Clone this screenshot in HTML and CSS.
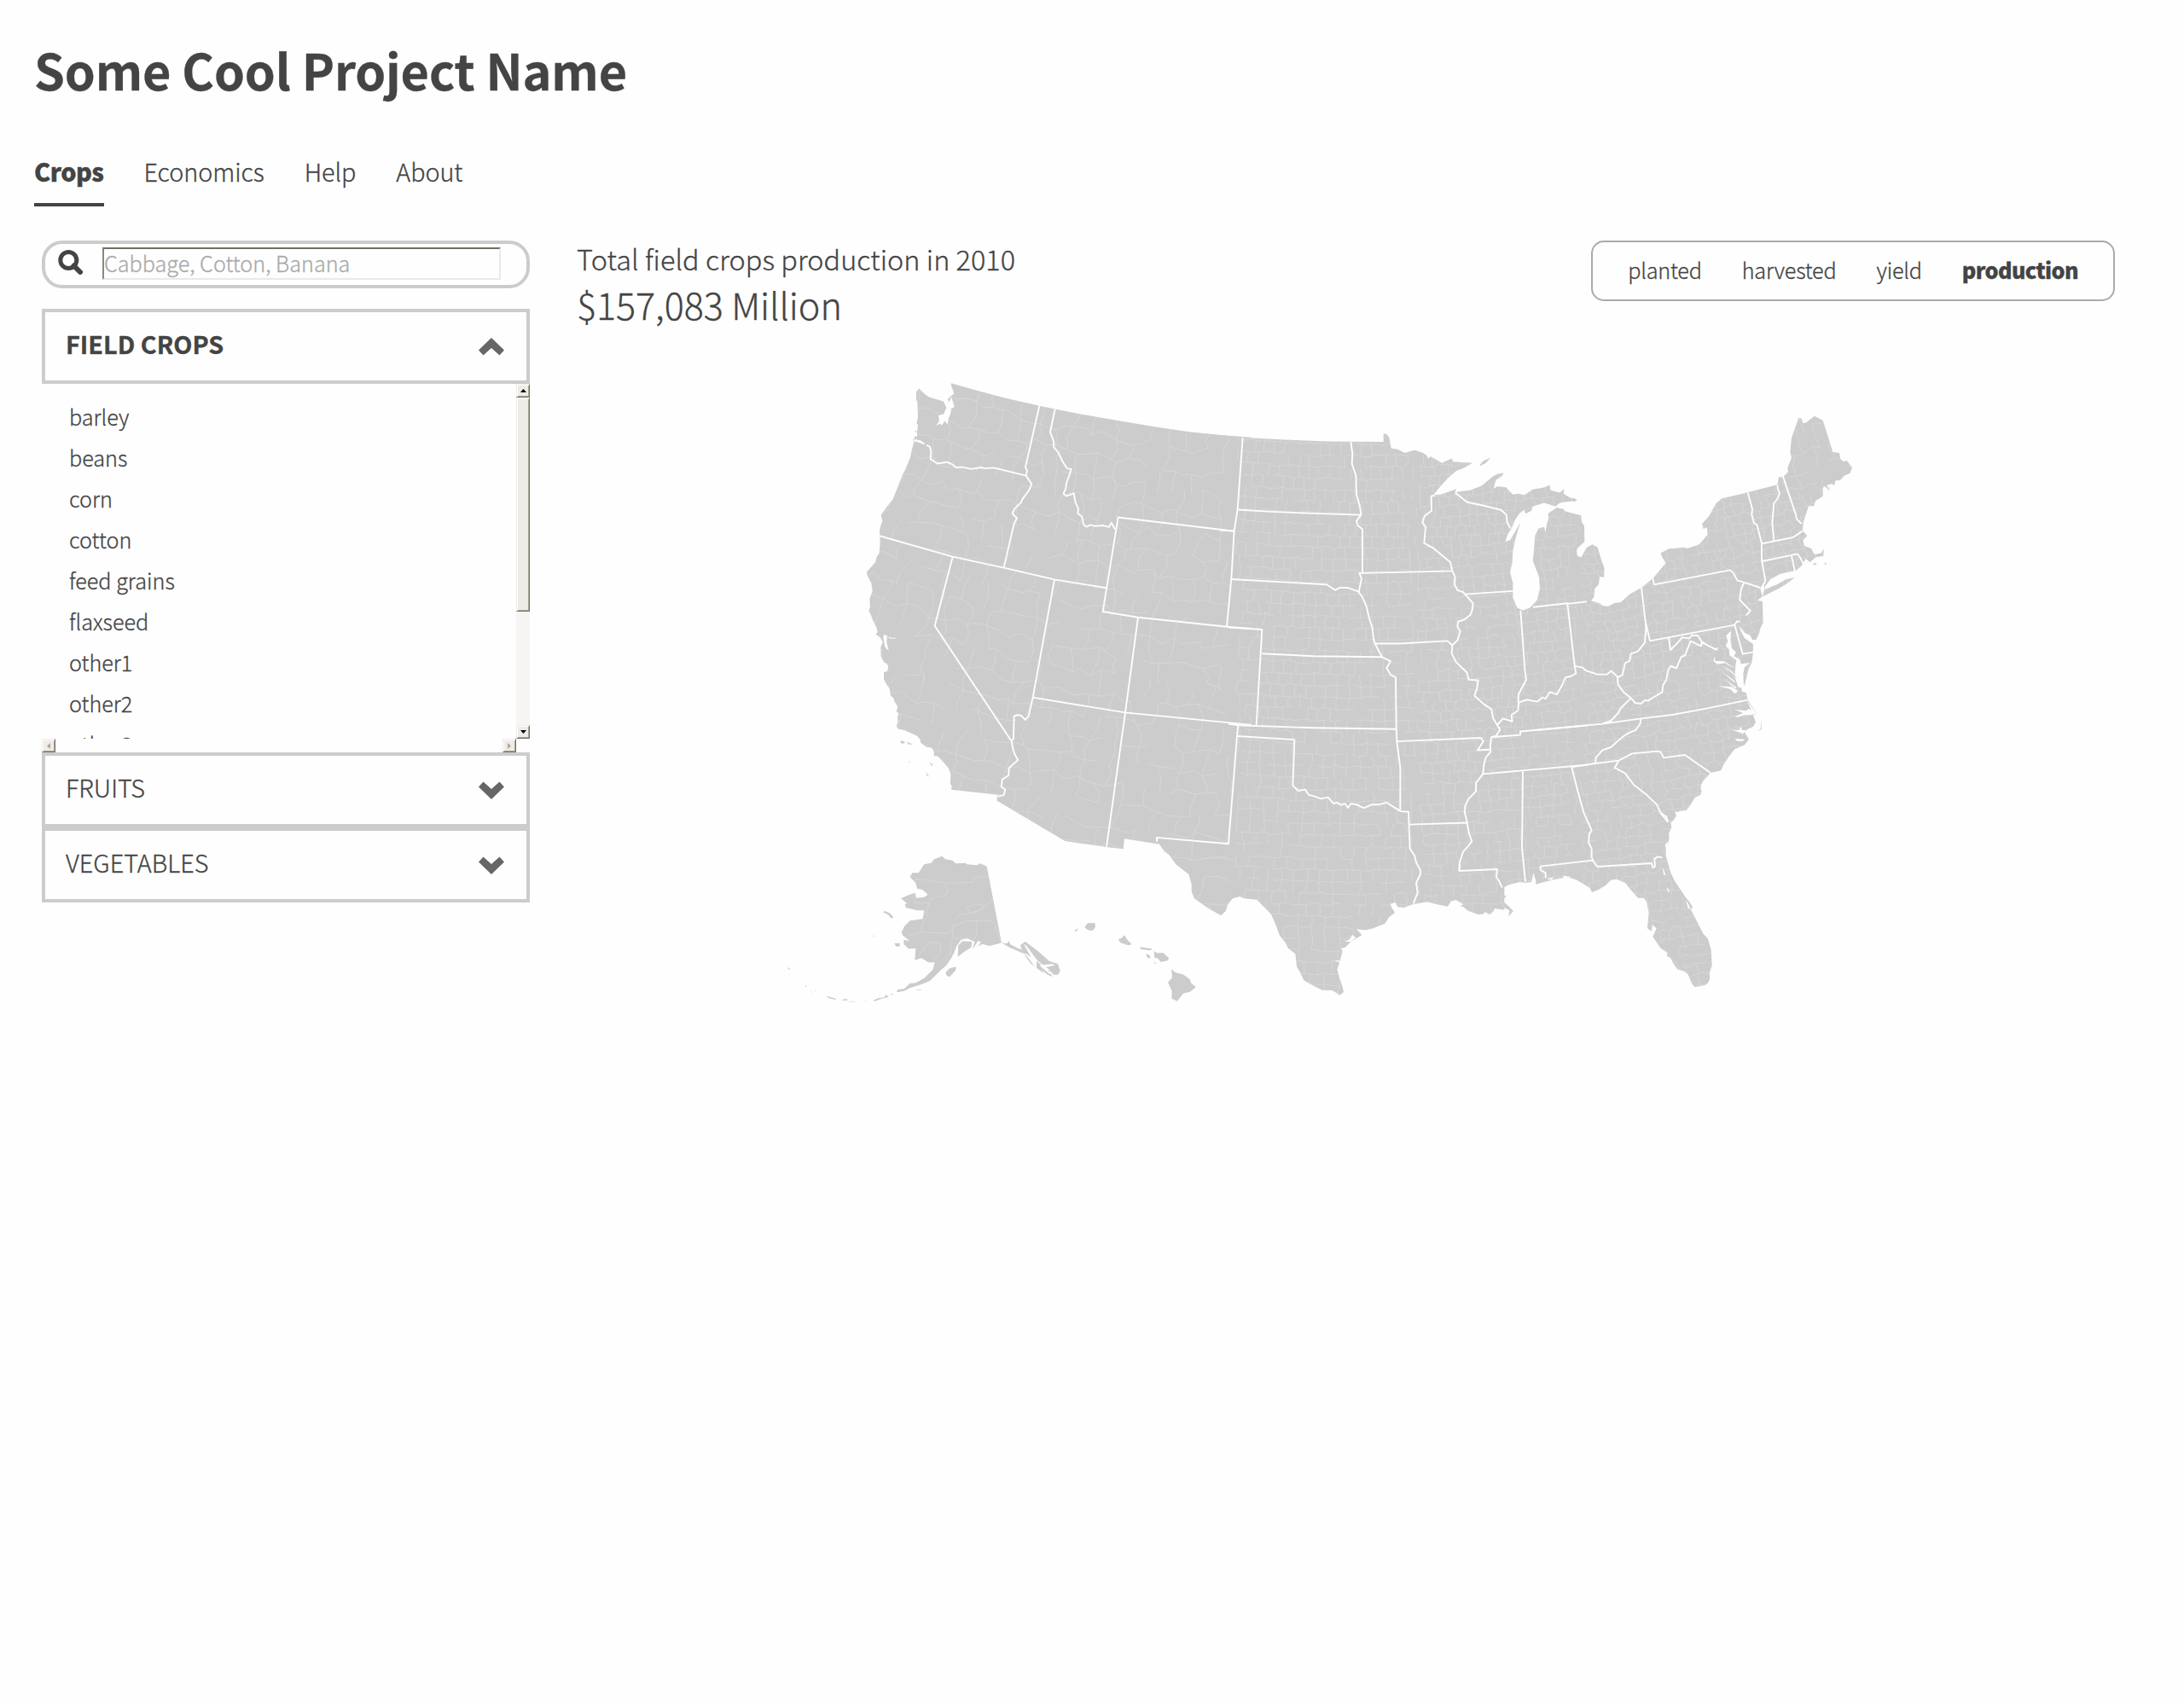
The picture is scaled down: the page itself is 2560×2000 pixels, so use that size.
FILE: index.html
```html
<!DOCTYPE html>
<html lang="en">
<head>
<meta charset="utf-8">
<title>Some Cool Project Name</title>
<link rel="stylesheet" href="styles.css">
</head>
<body>
<header class="site-header">
  <h1 class="site-title">Some Cool Project Name</h1>
  <nav class="tabs">
    <a class="tab tab-active">Crops</a>
    <a class="tab">Economics</a>
    <a class="tab">Help</a>
    <a class="tab">About</a>
  </nav>
</header>
<main class="content">
  <aside class="sidebar">
    <div class="search">
      <svg class="search-icon" viewBox="0 0 29 29"><circle cx="12.3" cy="12" r="9.5" fill="none" stroke="#444" stroke-width="5"/><path d="M18.5 18.5L26 26" stroke="#444" stroke-width="6" stroke-linecap="round"/></svg>
      <div class="search-field">Cabbage, Cotton, Banana</div>
    </div>
    <section class="group group-open">
      <span>FIELD CROPS</span>
      <svg class="chevron" viewBox="0 0 30 21"><path d="M15 0L30 14.5 24.5 20.5 15 12 5.500 20.5 0 14.500Z"/></svg>
    </section>
    <div class="scroller">
      <ul class="crops">
        <li>barley</li><li>beans</li><li>corn</li><li>cotton</li><li>feed grains</li><li>flaxseed</li><li>other1</li><li>other2</li><li>other3</li>
      </ul>
      <div class="vbar">
        <div class="bar-btn"><svg viewBox="0 0 7 4"><path d="M3.5 0L7 4H0Z"/></svg></div>
        <div class="thumb"></div>
        <div class="track"></div>
        <div class="bar-btn"><svg viewBox="0 0 7 4"><path d="M0 0H7L3.500 4Z"/></svg></div>
      </div>
    </div>
    <div class="hbar">
      <div class="bar-btn bar-off"><svg viewBox="0 0 4 7"><path d="M4 0V7L0 3.500Z"/></svg></div>
      <div class="bar-btn bar-off"><svg viewBox="0 0 4 7"><path d="M0 0V7L4 3.500Z"/></svg></div>
    </div>
    <section class="group">
      <span>FRUITS</span>
      <svg class="chevron" viewBox="0 0 30 21"><path d="M15 21L30 6.500 24.500 .5 15 9 5.500 .5 0 6.500Z"/></svg>
    </section>
    <section class="group">
      <span>VEGETABLES</span>
      <svg class="chevron" viewBox="0 0 30 21"><path d="M15 21L30 6.500 24.500 .5 15 9 5.500 .5 0 6.500Z"/></svg>
    </section>
  </aside>
  <div class="main">
    <div class="summary">
      <div class="totals">
        <div class="total-label">Total field crops production in 2010</div>
        <div class="total-value">$157,083 Million</div>
      </div>
      <div class="measures">
        <a>planted</a><a>harvested</a><a>yield</a><a class="measure-active">production</a>
      </div>
    </div>
    <svg class="map" viewBox="900 430 1300 780">
      <defs>
        <path id="west" transform="translate(1000 430) scale(.33333 .3699)" d="M345 52L400 66 455 80 530 98 655 124 710 134 800 150 930 170 1060 190 1180 206 1300 217 1400 224V1512H1068L954 1496 950 1528 890 1522 745 1503 505 1375 508 1360 515 1357 345 1340 347 1328 342 1322 343 1290 335 1272 320 1256 300 1236 290 1232 284 1236 285 1224 281 1213 275 1207 258 1205 238 1192 236 1182 225 1170 200 1160 180 1152 160 1148 152 1140 158 1125 156 1112 160 1098 152 1092 157 1078 145 1060 142 1050 132 1042 128 1020 115 1002 108 990 108 968 120 965 124 950 118 940 110 938 98 918 97 890 104 872 95 858 80 848 86 840 82 825 70 805 63 788 55 772 60 760 58 735 68 712 66 698 64 685 50 662 48 650 60 638 78 620 82 605 92 590 95 555 93 520 98 500 103 488 98 470 115 448 140 420 155 385 175 340 184 325 200 290 208 258 214 238 211 230 222 215 217 205 226 200 228 185 223 178 228 160 226 112 222 105 222 80 232 69 248 83 265 95 300 105 325 112 340 95 355 85 345 60Z"/>
        <path id="central" transform="translate(1440 480) scale(.33333 .34439)" d="M-60 85L0 90 50 95 200 103 350 109 545 110V82L556 84 565 95 572 132 595 136 620 148 640 142 655 139 685 148 695 155 704 168 710 160 725 168 750 182 785 167 790 178 858 182 830 198 800 210 770 235 745 262 720 292 745 290 790 275 800 270 795 292 805 280 850 275 890 260 930 228 945 220 968 216 960 228 940 240 932 270 945 262 975 265 1000 290 1020 287 1040 292 1070 272 1110 266 1130 257 1132 275 1165 283 1181 270 1178 287 1205 303 1215 302 1222 310 1165 318 1150 330 1110 318 1070 330 1065 345 1045 355 1040 342 1025 352 1008 375 995 405 982 425 973 450 990 445 1010 412 1027 385 1018 410 1008 445 1000 480 998 520 990 555 1000 590 1000 640 1015 675 1035 684 1060 675 1085 650 1095 610 1092 570 1080 540 1070 515 1073 490 1078 430 1090 405 1110 400 1114 418 1122 380 1140 365 1142 350 1155 335 1180 340V1568H-60Z"/>
        <path id="east" transform="translate(1800 470) scale(.33333)" d="M45 395L60 385 75 375 110 390 130 395 160 403 162 425 171 440 172 495 150 515 144 525 147 545 160 550 180 515 200 505 218 515 230 555 242 590 240 620 225 618 222 645 208 660 205 690 195 703 225 712 235 720 255 723 275 712 300 708 330 680 372 657 412 625 458 570 445 550 440 535 470 520 520 515 535 518 575 505 605 470 602 445 590 450 585 433 610 405 635 360 655 343 745 322 850 295 855 268 870 268 888 250 886 235 900 200 895 180 900 130 925 60 935 62 940 78 950 77 980 53 1010 68 1045 180 1068 183 1072 205 1082 213 1095 210 1113 235 1105 255 1085 263 1070 280 1055 280 1050 297 1038 290 1032 315 1018 300 1010 305 1010 335 995 345 985 350 978 370 960 370 950 400 942 425 938 455 955 475 940 490 945 510 960 515 970 520 980 540 1006 535 1010 522 1000 514 1013 525 1012 545 985 550 965 568 950 555 935 580 915 597 900 600 860 608 825 628 805 655 808 662 850 645 880 628 912 620 880 645 850 662 795 690 780 702 798 705 800 780 790 800 785 820 775 840 762 840 755 825 735 815 715 790 722 810 735 835 765 855 765 885 760 920 748 945 735 1000 725 1000V1022L740 1026 745 1050 778 1100 765 1105 774 1130 765 1145 745 1155 735 1165 750 1190 735 1210 700 1225 680 1250 660 1280 652 1300 615 1308 590 1335 582 1350 580 1375 560 1395 540 1415 525 1440H45Z"/>
        <path id="south" transform="translate(1700 760) scale(.33333)" d="M0 400L860 500 885 500 880 515 860 525 845 550 830 570 805 572 785 605 775 612 778 630 768 650 770 665 765 690 758 705 758 730 768 765 775 790 790 820 830 880 842 893 853 912 845 917 890 1005 905 1020 917 1060 920 1115 912 1140 912 1165 905 1178 895 1185 860 1192 850 1180 835 1145 820 1135 800 1130 785 1110 775 1090 762 1082 762 1070 755 1065 740 1055 712 1015 725 985 710 973 708 995 693 985 698 930 690 890 680 878 660 878 635 850 615 825 585 812 565 815 545 835 520 850 498 858 490 842 445 815 415 805 370 812 330 822 300 830 301 818 292 790 286 822 265 825 245 822 210 830 185 842 165 860 190 856 186 868 198 872 180 885 205 907 222 925 205 942 208 922 190 912 150 908 155 920 145 932 125 925 115 935 95 935 60 922 30 895 0 890Z"/>
        <path id="texas" transform="translate(1400 900) scale(.33333)" d="M-133 255L-105 295 -90 305 -65 340 -20 375 -10 410 -10 435 0 460 45 492 93 520 110 505 118 480 135 460 160 453 175 460 220 464 235 480 270 515 285 550 300 590 320 615 330 635 355 655 360 700 372 720 385 748 415 765 450 782 485 783 512 800 525 788 518 760 512 745 502 710 512 680 522 640 550 612 590 588 570 568 610 572 640 560 670 548 685 525 705 510 690 478 705 485 720 498 770 480 820 472 850 480 890 488 905 468 935 475 935 488 950 490 970 505 1000 517 1015 503 1040 517 1055 495 1090 500V250Z"/>
        <path id="alaska" transform="translate(900 980) scale(.33333)" d="M612 71L625 82 650 86 660 97 695 95 700 100 735 103 748 97 770 107 822 376 780 387 755 380 720 395 728 372 700 360 680 365 665 385 655 410 645 430 628 455 610 470 570 510 540 522 500 535 480 545 452 550 458 540 480 538 500 518 520 517 550 500 580 470 587 445 565 445 540 430 517 437 520 395 495 397 478 380 478 365 500 370 475 350 470 340 480 318 500 298 545 292 550 262 525 262 485 252 482 240 490 238 468 220 495 208 518 200 522 218 548 216 563 206 545 190 525 185 520 165 500 145 508 130 530 130 550 100 575 95 585 82ZM668 425L670 385 685 370 718 372 715 392 690 408ZM625 480L640 465 663 460 660 473 640 495 630 493ZM445 377L465 377 463 390 450 388ZM405 268L412 264 430 272 443 287 432 289 425 278ZM822 376L840 379 848 369 852 381 880 395 893 400 888 385 905 371 950 405 990 440 1020 450 1028 475 1020 488 1005 488 990 470 1000 495 965 480 940 460 925 450 900 415 880 405 850 392ZM68 463L76 465 77 473ZM130 528L138 526 133 532ZM205 562L218 566 240 572 238 576 215 571ZM262 575L280 573 278 579 262 578ZM370 578L390 570 410 568 415 558 425 566 395 574 378 581ZM430 557L440 554 436 560ZM278 581L306 582 304 584ZM340 580L345 579 344 582ZM152 547L155 549 154 553ZM165 542L172 545 168 546ZM367 347L374 354 371 355ZM78 484L81 485 79 487ZM521 540L545 542 530 544Z"/>
        <path id="hawaii" transform="translate(900 980) scale(.33333)" d="M1078 336L1085 328 1092 326 1086 335ZM1114 320L1125 307 1150 306 1152 320 1142 334 1125 331ZM1232 362L1242 361 1255 349 1264 365 1280 381 1268 385 1240 376ZM1310 391L1352 397 1345 403 1310 398ZM1328 415L1340 418 1347 427 1338 431ZM1358 405L1370 412 1390 411 1411 430 1405 439 1382 443 1370 430 1360 428ZM1356 447L1368 443 1362 449ZM1419 469L1433 480 1460 487 1485 505 1487 515 1505 532 1485 548 1460 554 1440 581 1420 572 1421 545 1407 515 1422 498Z"/>
        <path id="isles" transform="translate(1000 430) scale(.33333 .3699)" d="M165 1185L180 1187 182 1193 170 1194ZM189 1188L210 1196 195 1197ZM268 1253L280 1260 277 1266ZM257 1284L267 1299 260 1297ZM195 1251L202 1254 198 1255Z"/>
        <path id="royale" transform="translate(1440 480) scale(.33333 .34439)" d="M883 190L895 176 922 164 905 182 887 192Z"/>
        <path id="atlantic" transform="translate(1800 470) scale(.33333)" d="M975 577L980 568 990 576ZM1015 568L1024 574 1018 577ZM120 350L135 342 146 348 138 354ZM793 1120L794 1155 782 1161 791 1153Z"/>
        <clipPath id="land"><use href="#west"/><use href="#central"/><use href="#east"/><use href="#south"/><use href="#texas"/></clipPath>
      </defs>
      <g class="land"><use href="#west"/><use href="#central"/><use href="#east"/><use href="#south"/><use href="#texas"/><use href="#alaska"/><use href="#hawaii"/><use href="#isles"/><use href="#royale"/><use href="#atlantic"/></g>
      <g clip-path="url(#land)"><path id="counties" class="county"/></g>
      <g class="county" transform="translate(900 980) scale(.33333)">
        <path d="M518 153L545 153 620 166 722 163 725 149 775 140M620 166L634 190 630 207 590 217 568 225V238L515 235V205M568 238L555 270 560 285 542 310V338L640 343 650 325 655 300 672 276 728 272 790 225M542 338L495 350M650 320L695 300 780 298 800 312 820 375M735 300V340L730 360H650V322M700 250L735 240 760 245 755 260 708 270ZM643 360V415L628 425V440M530 425L565 375H607V410L585 435"/>
      </g>
      <g class="water" transform="translate(1000 430) scale(.33333 .3699)">
        <path d="M318 110L330 100 338 112 345 95 350 108 356 128 345 132 342 150 335 165 332 182 322 172 312 186 306 180 292 187 303 170 300 154 318 150 328 130ZM316 78L330 72 336 84 350 70 345 88 325 92ZM211 228L240 235 250 245 230 240ZM225 198L215 218 225 222ZM106 860L108 849 120 852 118 872 125 900 112 888ZM120 855L140 860 150 858 148 862 130 861Z"/>
      </g>
      <g class="water" transform="translate(1800 470) scale(.33333)">
        <path d="M688 808L670 825 676 845 668 862 680 873 682 895 706 912 702 940 700 970 712 1005 725 1010 733 1025 730 960 735 935 755 922 722 925 718 908 697 898 705 885 690 870 685 840ZM628 898L632 915 660 915 690 932 700 940 665 922 640 926 626 915ZM650 930L690 950 710 978 685 952ZM640 1002L690 1006 712 1020 700 1030 685 1014ZM662 978L705 1006 703 1012ZM645 945L700 985 702 992ZM700 1110L730 1098 700 1085 740 1090 750 1082 778 1100 755 1105 735 1105 710 1112ZM690 1157L715 1158 722 1145 726 1158 740 1158 730 1170ZM700 1188L735 1190 730 1196 710 1197ZM742 1052L778 1100 760 1090ZM1025 295L1030 310 1040 295ZM790 660L800 640 805 660 798 690Z"/>
      </g>
      <g class="water" transform="translate(1700 760) scale(.33333)">
        <path d="M746 770L755 790 764 828 758 800 750 795ZM760 840L770 850 768 862ZM828 885L838 900 845 920 835 912ZM775 605L795 590 812 575 790 575 795 590ZM755 690L765 680 760 710ZM340 810L365 806 355 815ZM395 800L425 803 400 808ZM2 895L25 905 15 910 5 905Z"/>
      </g>
      <g class="water" transform="translate(1400 900) scale(.33333)">
        <path d="M686 470L690 480 706 473 715 490 735 492 708 510 695 495ZM570 565L582 575 600 572 625 565 590 590ZM555 588L568 598 550 612 528 612 545 605ZM515 635L530 632 525 650ZM490 675L515 680 510 685ZM900 470L920 465 945 480 930 492 905 482Z"/>
      </g>
      <g class="water" transform="translate(900 980) scale(.33333)">
        <path d="M900 380L908 385 950 440 990 470 985 474 945 440 945 465 935 455 905 415 925 425ZM895 410L915 418 912 424 900 415ZM925 425L935 432 932 445ZM955 455L1000 450 1010 455 975 462 1000 485 990 485ZM960 470L985 488 975 488ZM740 368L750 375 735 390 722 395Z"/>
      </g>
      <g class="state" transform="translate(1000 430) scale(.33333 .3699)">
        <path d="M214 234L235 236 250 245M258 248L270 254 274 268 272 292 296 307 330 302 350 310 362 319 385 318 415 324 450 319 465 322 495 320 608 345M655 124L606 318 612 330 608 345 628 372 618 392 595 420 590 430 568 450 560 465 576 480 566 497 560 520 530 637M93 536L350 602 530 637 708 674 890 701M350 602L287 821 557 1187 562 1210 568 1228 580 1247 562 1260 548 1272 547 1295 524 1308 522 1332 535 1340 530 1357 510 1362M557 1187L564 1178 566 1107 580 1103 592 1106 605 1119 617 1108 632 1048 708 674M632 1048L957 1096 1380 1133 1400 1135M1400 830L1314 824 1002 794 957 1096 891 1522M710 134L693 207 705 235 706 255 722 272 735 298 752 322 767 324 760 345 750 368 748 385 740 402 750 410 776 401 782 430 792 450 790 465 805 475 810 500 820 507 835 501 850 505 880 503 900 508 908 494 921 515M1002 794L878 776 932 477 1340 521M1370 224L1352 451 1340 521 1330 672 1314 824M1354 1135L1350 1171 1320 1512 1068 1492 1068 1505"/>
      </g>
      <g class="state" transform="translate(1440 480) scale(.33333 .34439)">
        <path d="M430 111L436 150 434 185 448 225 450 290 462 330 466 359 450 380 455 395 471 408V557M32 341L150 348 300 354 466 359M-30 411L20 414M10 578L345 596 375 615 390 607 420 607 462 622M785 550L471 557 460 557 468 575 458 622 470 638 485 670 495 712 505 740 510 780 515 797 540 843 570 857 556 880 570 903 588 912 590 1090 592 1130 604 1220V1364M515 797L600 797 770 788 787 803M118 831L300 840 540 843M0 742L118 749 98 1075M0 1070L35 1075 300 1084 590 1088M32 1112L232 1124 226 1280 245 1298 270 1294 282 1312 305 1318 325 1325 350 1320 370 1342 380 1338 395 1346 410 1342 420 1356 430 1342 450 1345 475 1357 505 1345 530 1345 555 1338 575 1350 605 1368 633 1370 638 1495 655 1520 660 1542 675 1568M592 1130L888 1118 896 1130 876 1160 918 1158M725 292L713 295 714 345 690 362 682 385 693 400 688 455 720 472 745 492 780 520 787 550 797 570 795 595 805 615 825 622 860 660 858 680 850 700 830 715 808 722 805 740 815 755 806 785 787 803 785 830 800 860 838 895 845 920 878 922 875 945 865 975 900 1005 925 1020 930 1050 945 1075M832 629L1000 618M800 285L838 315 900 328 958 342 977 358 980 385 992 405M1027 684L1042 885 1047 920 1020 970 1018 995M1070 673L1192 660 1200 661 1260 654M1192 660L1217 872 1222 898 1205 908 1185 912 1175 935 1155 970 1130 962 1115 985 1105 980 1085 995 1050 988 1020 998 1018 1025 995 1040 998 1062 965 1052 945 1075 955 1090 940 1112 925 1115 920 1140 922 1165 905 1185 898 1210 895 1240 880 1260 870 1270 870 1300 845 1325 832 1350 830 1370 838 1400 845 1440 856 1470 840 1490 825 1505 812 1545 812 1568M928 1115L1026 1108V1096L1260 1076M895 1241L1260 1210M636 1413L838 1407"/>
      </g>
      <g class="state" transform="translate(1800 470) scale(.33333)">
        <path d="M372 657L386 775 402 844 700 788 708 775 718 777M412 625L417 646 684 595 695 605 710 632 733 638 790 657M733 638L722 665 718 700 755 738 740 754M386 768L388 800 384 850 360 880 335 890 330 915 315 922 305 965 288 972 280 962 265 950 250 962 215 962 205 957 180 950 165 938 135 932M288 972L290 998 310 1025 335 1045 300 1080 290 1098 265 1125 235 1135M335 1045L350 1062 370 1065 385 1052 395 1055 415 1042 445 1025 448 1000 460 980 465 950 475 932 495 940 512 900 525 895 545 845 582 862 585 848 605 860 635 875 640 868M468 832L474 876 500 850 515 832 540 835 550 824 570 825 585 848M0 1158L235 1136 370 1117 480 1104 600 1082 745 1052M370 1117L368 1135 352 1158 340 1162 315 1175 290 1195 265 1218 235 1228 212 1255 210 1275M125 1288L210 1275 292 1265 340 1240 430 1232 440 1235 450 1255 525 1245 615 1308M292 1265L278 1290 315 1310 345 1350 390 1385 405 1400 425 1418 440 1450 465 1480M700 788L728 890 765 884M746 322L762 380 760 400 768 430 778 435 795 500V560L808 632 800 650M850 295L852 310 858 325 850 345 838 360 832 430 838 490M870 266L915 400 918 415 935 432M795 502L905 480 920 470 938 458M797 564L920 538 930 550 942 575M900 545L912 600"/>
      </g>
      <g class="state" transform="translate(1700 760) scale(.33333)">
        <path d="M30 783L165 777 162 805 172 820 182 842M335 808V790L317 780V767L500 746 517 768 708 756 712 772 720 768 718 740 730 733 745 736M427 418L450 510 470 580 497 640 488 655 487 685 497 705 497 735 502 746M255 433L252 700 264 822M740 580L760 592 765 612"/>
      </g>
      <g class="state" transform="translate(1400 900) scale(.33333)"><path d="M795 360L795 375 780 405 785 440 770 478M934 340L930 363"/></g>
    </svg>
  </div>
</main>
<script src="counties.js"></script>
</body>
</html>
```
FILE: styles.css
```css
* { box-sizing: border-box; }
body {
  margin: 0;
  background: #fefefe;
  color: #444;
  font-family: "Noto Sans CJK SC", "Noto Sans", sans-serif;
  font-weight: 300;
  -webkit-text-stroke: .3px;
}
.site-header { padding: 39px 40px 0; }
.site-title { margin: 0; font-size: 57.6px; line-height: 84px; font-weight: 700; letter-spacing: -.15px; }
.tabs { display: flex; gap: 47px; margin-top: 58px; }
.tab { height: 61px; font-size: 28.8px; line-height: 40px; letter-spacing: -.1px; }
.tab-active { font-weight: 900; letter-spacing: -.5px; border-bottom: 4px solid #444; }
.content { display: flex; gap: 55px; padding: 40px 81px 0 49px; }
.sidebar { width: 572px; flex: none; }
.search {
  display: flex;
  height: 56px;
  padding: 4px 0 0 15px;
  border: 4px solid #ccc;
  border-radius: 24px;
}
.search-icon { width: 29px; height: 29px; margin: 3px 23px 0 0; }
.search-field {
  width: 467px;
  height: 38px;
  border: 2px solid;
  border-color: #716f64 #ece9e4 #ece9e4 #8a887e;
  color: #aaa;
  font-size: 25.2px;
  line-height: 32px;
  white-space: nowrap;
}
.group {
  display: flex;
  justify-content: space-between;
  height: 88px;
  padding: 17px 26px 0 24px;
  border: 4px solid #ccc;
  font-size: 28.8px;
  line-height: 40px;
}
.group-open { margin-top: 24px; font-weight: 700; }
.chevron { width: 30px; height: 21px; margin-top: 13px; fill: #666; }
.scroller { display: flex; height: 416px; overflow: hidden; }
.crops { flex: 1; margin: 0; padding: 14px 0 0 32px; list-style: none; font-size: 25.2px; line-height: 48px; }
.vbar { display: flex; flex-direction: column; width: 16px; }
.bar-btn, .thumb {
  width: 16px;
  height: 16px;
  background: #efebe7;
  border: 1px solid;
  border-color: #efebe7 #716f64 #716f64 #efebe7;
  box-shadow: inset 1px 1px #fff, inset -1px -1px #aca899;
}
.bar-btn { display: flex; align-items: center; justify-content: center; }
.bar-btn svg { width: 7px; height: 4px; }
.bar-btn.bar-off svg { width: 4px; height: 7px; fill: #aca899; }
.thumb { height: 251px; }
.track { flex: 1; background: repeating-conic-gradient(#fff 0 25%, #efebe7 0 50%) 0 0 / 2px 2px; }
.hbar { display: flex; justify-content: space-between; width: 556px; }
.main { flex: 1; }
.summary { display: flex; justify-content: space-between; align-items: flex-start; height: 108px; }
.totals { margin-top: -1px; }
.total-label { font-size: 32.4px; line-height: 44px; letter-spacing: .05px; }
.total-value { font-size: 43.2px; line-height: 62px; letter-spacing: -.1px; }
.measures {
  display: flex;
  gap: 47px;
  height: 71px;
  padding: 12px 41px;
  border: 2px solid #aaa;
  border-radius: 15px;
  font-size: 25.2px;
  line-height: 40px;
  letter-spacing: -.2px;
}
.measure-active { font-weight: 900; letter-spacing: -.6px; }
.map { display: block; width: 1300px; height: 780px; margin: 40px 0 0 224px; }
.land { fill: #ccc; }
.water { fill: #fefefe; }
.state { fill: none; stroke: #fefefe; stroke-width: 1.9; stroke-linejoin: round; }
.county { fill: none; stroke: #d9d9d9; stroke-width: .8; }
.state path, .county path { vector-effect: non-scaling-stroke; }
```
FILE: counties.js
```js
// Draws the county mesh along the meridians and parallels of a conic projection.
const apex = { x: 1600, y: -1100 };
let seed = 7;
const random = () => (seed = (seed * 16807) % 2147483647) / 2147483647;

const zones = [
  { x0: 1000, x1: 1448, y0: 440, y1: 1010, step: 25, jitter: .42, keep: .74 },
  { x0: 1448, x1: 1660, y0: 480, y1: 1170, step: 13.5, jitter: .24, keep: .78 },
  { x0: 1400, x1: 1448, y0: 1000, y1: 1100, step: 26, jitter: .4, keep: .7 },
  { x0: 1660, x1: 1850, y0: 480, y1: 1100, step: 12, jitter: .34, keep: .78 },
  { x0: 1850, x1: 2200, y0: 560, y1: 1170, step: 11.5, jitter: .45, keep: .78 },
  { x0: 1950, x1: 2200, y0: 480, y1: 560, step: 24, jitter: .4, keep: .7 }
];

let d = "";
for (const z of zones) {
  const inside = p => p[0] > z.x0 && p[0] < z.x1 && p[1] > z.y0 && p[1] < z.y1;
  const line = pts => {
    if (pts.every(inside) && random() < z.keep) {
      d += "M" + pts.map(p => p[0].toFixed(1) + " " + p[1].toFixed(1)).join("L");
    }
  };
  const rows = [];
  for (let r = 1540; r < 2330; r += z.step) {
    const row = [];
    for (let a = -660; a < 640; a += z.step / 2) {
      const rr = r + (random() - .5) * z.step * z.jitter;
      const t = (a + (random() - .5) * z.step * z.jitter) / 1850;
      row.push([apex.x + rr * Math.sin(t), apex.y + rr * Math.cos(t)]);
    }
    rows.push(row);
  }
  rows.forEach((row, j) => {
    for (let i = 0; i + 2 < row.length; i += 2) line([row[i], row[i + 1], row[i + 2]]);
    if (rows[j + 1]) {
      for (let i = Math.floor(j / 3) % 2; i < row.length; i += 2) {
        if (random() < .08) i += 1;
        if (i >= row.length) break;
        const a = row[i], b = rows[j + 1][i];
        const k = (random() - .5) * z.step * z.jitter;
        line([a, [(a[0] + b[0]) / 2 + k, (a[1] + b[1]) / 2], b]);
      }
    }
  });
}
document.getElementById("counties").setAttribute("d", d);
```
